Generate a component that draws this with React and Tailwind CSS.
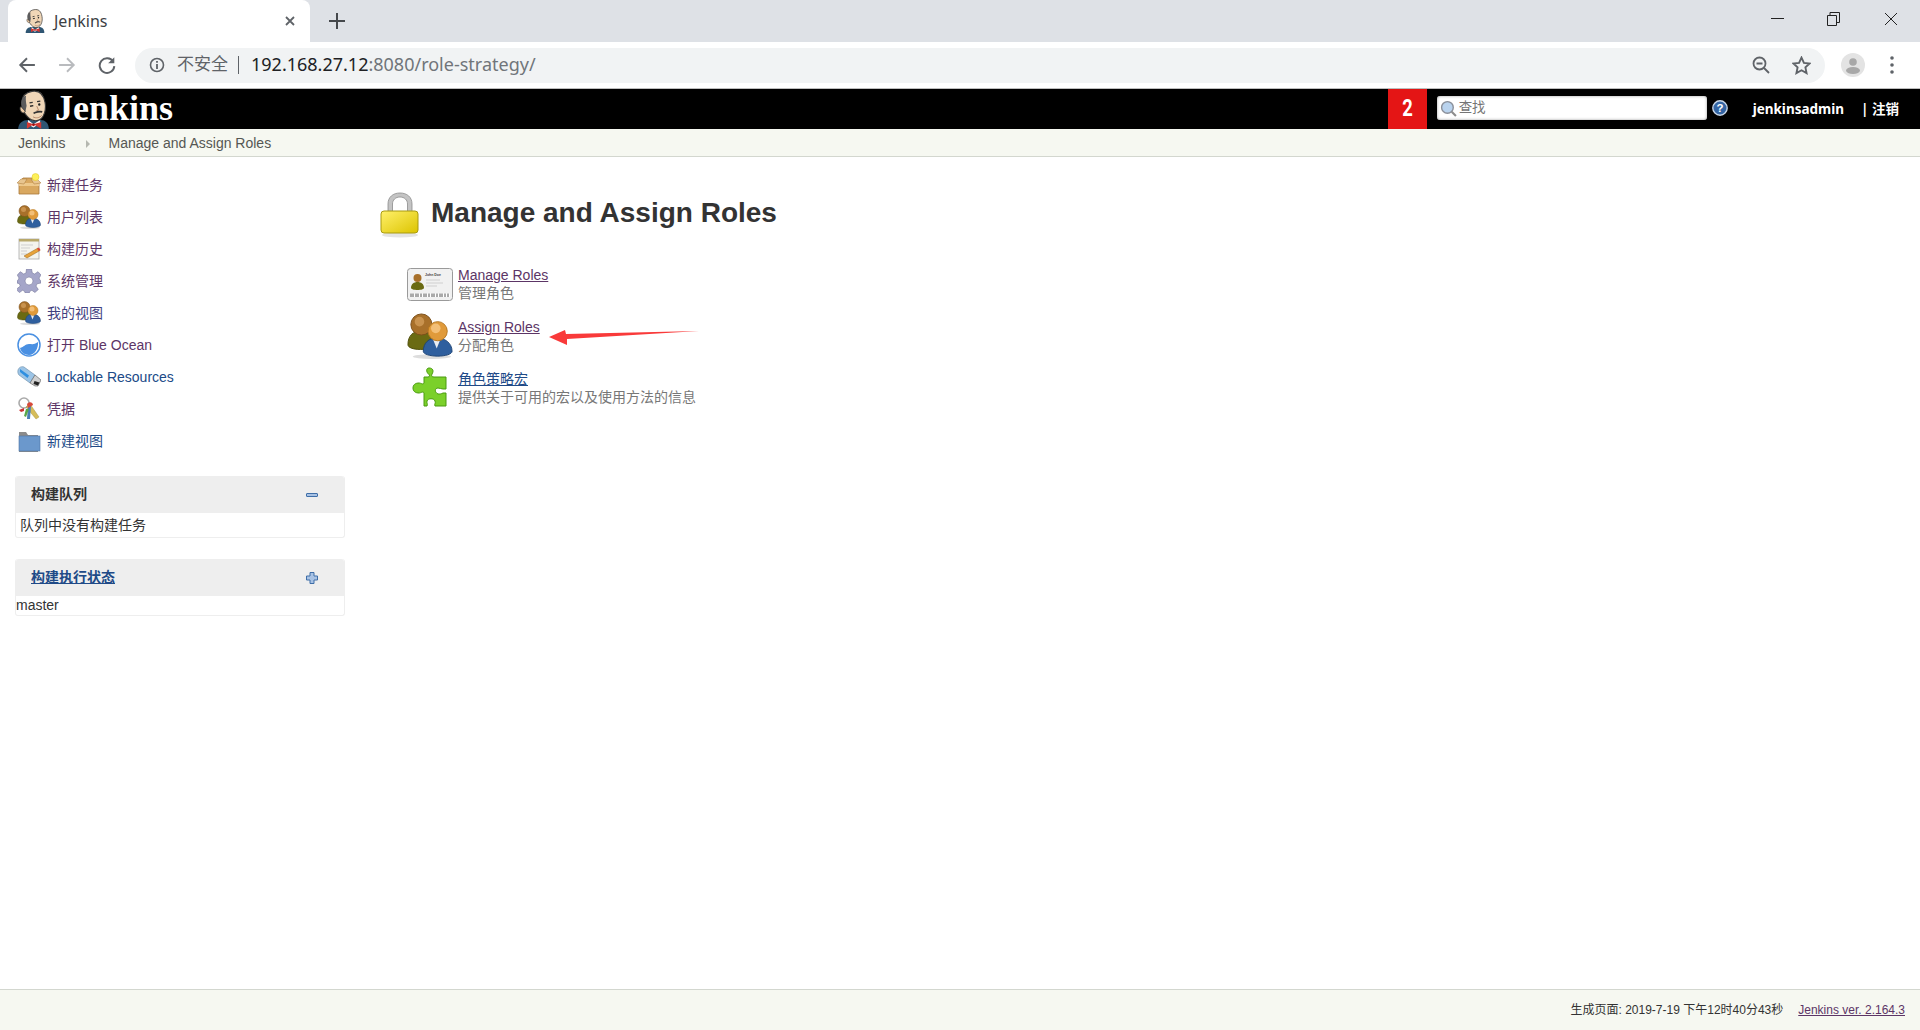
import React from "react";

const FONT = "[font-family:'Liberation_Sans','Noto_Sans_CJK_SC',sans-serif]";

function Butler({ className }) {
  return (
    <svg viewBox="0 0 30 36" className={className}>
      <path d="M1 36c0-6 4-9 9-9h11c5 0 8 3 8 9z" fill="#2f5673" />
      <path d="M10 27l5 4 6-4v3l-6 4-5-3z" fill="#fff" />
      <path d="M9 29l6 2-6 4zM22 29l-7 2 7 4z" fill="#d33833" />
      <circle cx="15" cy="31.500" r="1.300" fill="#a11" />
      <g transform="rotate(-10 15 15)">
        <path d="M5 13C5 5 9 1 16 1s10 4 10 12c0 4-1 7-2 9-2 4-5 6-8 6-4 0-6-2-8-5-2-3-3-6-3-10z" fill="#f0d6b7" stroke="#3a3a3a" strokeWidth="1" />
        <path d="M5 17C3 9 6 4 10 4c-1 3-1 6-1 9l-2 5z" fill="#5b5b5c" />
        <path d="M4 13c-2 0-2 5 1 6l2-1z" fill="#eac7a1" stroke="#3a3a3a" strokeWidth=".7" />
        <path d="M12 11h3M19 11h3" stroke="#333" strokeWidth="1.200" />
        <path d="M12 14h3" stroke="#222" strokeWidth="1.300" />
        <circle cx="20.500" cy="14" r="1.100" fill="#222" />
        <path d="M18 15l1 4-2 0" stroke="#b5876a" strokeWidth=".8" fill="none" />
        <path d="M14 21c2-1 6-1 8 0" stroke="#333" strokeWidth="1.500" fill="none" />
        <path d="M13 24c2 2 6 2 8 0" stroke="#b5876a" strokeWidth=".8" fill="none" />
      </g>
    </svg>
  );
}

function Users({ className }) {
  return (
    <svg viewBox="0 0 48 48" className={className}>
      <ellipse cx="26" cy="45.500" rx="20" ry="2.500" fill="#ddd" />
      <path d="M1 33c0-9 5-14 13-14s13 5 13 14c0 3-5 5-13 5S1 36 1 33z" fill="#6a6a12" stroke="#4d4d0a" />
      <circle cx="15" cy="12" r="11" fill="#a8702a" stroke="#7b4f1a" />
      <circle cx="13" cy="9" r="5" fill="#c9934f" />
      <path d="M17 40c0-9 6-14 14-14s16 5 16 14c0 3-7 5-15 5s-15-2-15-5z" fill="#2f5f9e" stroke="#1e4475" />
      <path d="M27 27l4 10 4-10z" fill="#e9edf3" />
      <circle cx="32" cy="19" r="10" fill="#e09a3a" stroke="#b5761f" />
      <circle cx="30" cy="16" r="5" fill="#f3bf77" />
    </svg>
  );
}

function NewJob({ className }) {
  return (
    <svg viewBox="0 0 24 24" className={className}>
      <path d="M2 10l4-5h12l4 5v11H2z" fill="#d9a860" stroke="#a9783a" strokeWidth=".8" />
      <path d="M2 10h20v3H2z" fill="#eec98c" />
      <path d="M0 10l4-4 6 0-3 5zM24 10l-4-4-6 0 3 5z" fill="#e8c58f" stroke="#a9783a" strokeWidth=".5" />
      <circle cx="18.500" cy="4" r="3.500" fill="#fdf05a" stroke="#e0c820" strokeWidth=".5" />
    </svg>
  );
}

function Notepad({ className }) {
  return (
    <svg viewBox="0 0 24 24" className={className}>
      <rect x="2" y="2" width="20" height="20" fill="#f4f4ee" stroke="#aaa" strokeWidth=".8" />
      <rect x="2" y="2" width="20" height="2.500" fill="#b8a86a" />
      <path d="M4 8h12M4 11h9M4 14h6M4 17h6" stroke="#cfcfcf" />
      <path d="M7 19l14-8 2 2.500-13 7.500z" fill="#e8a33a" stroke="#96661f" strokeWidth=".5" />
      <path d="M20 11.500l2-1 1.500 2.500-2 1z" fill="#d9483b" />
    </svg>
  );
}

function Gear({ className }) {
  return (
    <svg viewBox="0 0 24 24" className={className}>
      <path fillRule="evenodd" d="M9.500 0h5l.8 4 2.300 1 3.400-2.300 3 3.400L22 9l1 2.300 1 .7v2l-4 .8-1 2.300 2.300 3.400-3.400 3-3-2.200-1.900.8-.8 1.900h-4l-.8-1.900-1.900-.8-3 2.200-3.400-3L3.300 17l-1-2.300-2.300-.7v-2l1-.7L2 9 .3 6.100l3-3.400L6.700 5 9 4zM12 8a4 4 0 100 8 4 4 0 000-8z" fill="#a5a6c9" stroke="#77789c" strokeWidth=".6" />
    </svg>
  );
}

function Ocean({ className }) {
  return (
    <svg viewBox="0 0 24 24" className={className}>
      <circle cx="12" cy="12" r="11" fill="#fff" stroke="#4a90e2" strokeWidth="1.500" />
      <path d="M3 15c4-1 5-4 9-4 3 0 5 1 9-2 .5 6-3 13-9 13-5 0-8-3-9-7z" fill="#4a90e2" />
    </svg>
  );
}

function Usb({ className }) {
  return (
    <svg viewBox="0 0 24 24" className={className}>
      <path d="M1 5c1-3 4-4 6-3l11 8-5 8L2 10C1 9 .5 7 1 5z" fill="#9cc4e6" stroke="#6a8ca8" strokeWidth=".6" />
      <path d="M3 4l9 6.500-1.500 2.500L3 7z" fill="#2f8fe0" />
      <path d="M13 18l5-8 6 5-3 6h-3z" fill="#d0d0d0" stroke="#555" strokeWidth=".6" />
      <path d="M17.500 16l5 1.500-1.500 3-4.500-1.500z" fill="#222" />
    </svg>
  );
}

function Keys({ className }) {
  return (
    <svg viewBox="0 0 24 24" className={className}>
      <circle cx="7" cy="6" r="5" fill="none" stroke="#aaa" strokeWidth="1.600" />
      <path d="M9 10l10 12 3-2L13 7z" fill="#d6bd5a" stroke="#a08a30" strokeWidth=".4" />
      <path d="M11 9l-1 13h3l1-13z" fill="#4a7fb5" />
      <path d="M9 12l-2 7 2 1 3-8z" fill="#5aa84a" />
      <path d="M10 7c2-3 6-2 6 1l-5 3z" fill="#d84a3b" />
      <path d="M2 13l5-2v3l-3 1z" fill="#c33" />
    </svg>
  );
}

function Folder({ className }) {
  return (
    <svg viewBox="0 0 24 24" className={className}>
      <path d="M2 3h7l2 3h10v17H2z" fill="#8b8b8b" />
      <rect x="2" y="7" width="21" height="15" fill="#6b98cc" stroke="#4d76a6" strokeWidth=".6" />
    </svg>
  );
}

function Lock({ className }) {
  return (
    <svg viewBox="0 0 40 46" className={className}>
      <defs>
        <linearGradient id="lockbody" x1="0" y1="0" x2="1" y2="1">
          <stop offset="0" stopColor="#fff06a" />
          <stop offset="1" stopColor="#dcc400" />
        </linearGradient>
      </defs>
      <ellipse cx="20" cy="43" rx="18" ry="2.500" fill="#e4e4e4" />
      <path d="M8 20V12C8 5 13 1 20 1s12 4 12 11v8h-4.500v-8c0-4-3-7-7.500-7s-7.500 3-7.500 7v8z" fill="#c4c4c4" stroke="#8b8b8b" strokeWidth=".8" />
      <rect x="1" y="19" width="37" height="22" rx="3" fill="url(#lockbody)" stroke="#a89a10" />
    </svg>
  );
}

function IdCard({ className }) {
  return (
    <svg viewBox="0 0 46 34" className={className}>
      <rect x=".5" y=".5" width="45" height="32" rx="3" fill="#f1f1f1" stroke="#9a9a9a" />
      <circle cx="10.500" cy="10" r="4" fill="#a8702a" />
      <path d="M4 20c0-4 3-6 6.500-6s6.500 2 6.500 6c0 1-3 2-6.500 2S4 21 4 20z" fill="#6a6a12" />
      <text x="18" y="8" fontSize="3.500" fontWeight="700" fill="#444" fontFamily="Liberation Sans">John Doe</text>
      <path d="M19 12h14M19 15h17M19 18h11" stroke="#cfcfcf" />
      <path d="M3 25.500h40v3.500H3z" fill="#fff" />
      <path d="M4 25.500v3.500M6 25.500v3.500M9 25.500v3.500M11 25.500v3.500M14 25.500v3.500M17 25.500v3.500M19 25.500v3.500M22 25.500v3.500M25 25.500v3.500M27 25.500v3.500M30 25.500v3.500M33 25.500v3.500M35 25.500v3.500M38 25.500v3.500M41 25.500v3.500" stroke="#555" />
    </svg>
  );
}

function Puzzle({ className }) {
  return (
    <svg viewBox="0 0 36 42" className={className}>
      <path d="M17 1c4 0 5 3 3 6-1 2 0 3 2 3h12v12h-3c-2 0-3-1-5-1-3 0-4 4 0 6 2 0 3 0 5-1h3v13H23c-1-2 1-3 0-5-1-3-7-3-8 0-.5 2 1 3 0 5H12V26c-1-2-3 0-5 0-4 0-6-2-6-5 0-3 2-5 6-5 2 0 4 2 5 0v-6h4c2 0 2-2 .5-3C14 5 14 1 17 1z" fill="#7bd02a" stroke="#4a9a10" strokeWidth="1" />
    </svg>
  );
}

function Pane({ title, link, symbol, children, bodyClass }) {
  return (
    <div className="w-[330px] rounded-[3px] border border-[#eee] border-t-0">
      <div className="flex h-[37px] items-center justify-between rounded-t-[3px] bg-[#eeeeee] pl-[15px] pr-[26px] text-[14px] font-bold text-[#333]">
        {link ? <span className="text-[#204a87] underline">{title}</span> : <span>{title}</span>}
        {symbol}
      </div>
      <div className={bodyClass}>{children}</div>
    </div>
  );
}

const side = [
  [NewJob, "新建任务", "text-[#5c3566]"],
  [Users, "用户列表", "text-[#5c3566]"],
  [Notepad, "构建历史", "text-[#5c3566]"],
  [Gear, "系统管理", "text-[#5c3566]"],
  [Users, "我的视图", "text-[#3f3f7f]"],
  [Ocean, "打开 Blue Ocean", "text-[#5c3566]"],
  [Usb, "Lockable Resources", "text-[#204a87]"],
  [Keys, "凭据", "text-[#5c3566]"],
  [Folder, "新建视图", "text-[#204a87]"],
];

export default function App() {
  return (
    <div className={`flex h-[1030px] w-[1920px] flex-col overflow-hidden bg-white ${FONT}`}>
      {/* tab strip */}
      <div className="flex h-[42px] bg-[#dee1e6]">
        <div className="ml-[8px] flex h-[42px] w-[302px] items-center rounded-t-[8px] bg-white pl-[17px] pr-[14px]">
          <Butler className="h-[24px] w-[20px] shrink-0" />
          <span className="ml-[9px] flex-1 text-[16px] text-[#3c4043] [font-family:'Noto_Sans',sans-serif]">Jenkins</span>
          <svg viewBox="0 0 12 12" className="h-[12px] w-[12px]">
            <path d="M2 2l8 8M10 2l-8 8" stroke="#5f6368" strokeWidth="1.800" />
          </svg>
        </div>
        <div className="ml-[19px] self-center">
          <svg viewBox="0 0 16 16" className="h-[16px] w-[16px]">
            <path d="M8 0v16M0 8h16" stroke="#45484c" strokeWidth="2" />
          </svg>
        </div>
        <div className="ml-auto mt-[12px] flex items-start self-start pr-[22px]">
          <svg viewBox="0 0 13 13" className="h-[13px] w-[13px]"><path d="M0 6.500h13" stroke="#222" strokeWidth="1" /></svg>
          <svg viewBox="0 0 13 14" className="ml-[43px] h-[14px] w-[13px]">
            <path d="M.5 3.500h9v10h-9zM3 3.500V.5h9.500v10H9.500" stroke="#222" fill="none" />
          </svg>
          <svg viewBox="0 0 14 14" className="ml-[44px] h-[14px] w-[14px]"><path d="M1 1l12 12M13 1L1 13" stroke="#222" strokeWidth="1" /></svg>
        </div>
      </div>

      {/* toolbar */}
      <div className="flex h-[47px] items-center border-b border-[#bdbdbd] bg-white">
        <div className="ml-[18px] flex w-[117px] items-center gap-[22px]">
          <svg viewBox="0 0 16 16" className="h-[18px] w-[18px]"><path d="M15 8H2M8 2L2 8l6 6" stroke="#5f6368" strokeWidth="1.700" fill="none" /></svg>
          <svg viewBox="0 0 16 16" className="h-[18px] w-[18px]"><path d="M1 8h13M8 2l6 6-6 6" stroke="#b9bbbe" strokeWidth="1.700" fill="none" /></svg>
          <svg viewBox="0 0 16 16" className="h-[18px] w-[18px]"><path d="M13.500 5A6.500 6.500 0 1014.500 9" stroke="#5f6368" strokeWidth="1.700" fill="none" /><path d="M14.500 1v5.500H9z" fill="#5f6368" /></svg>
        </div>
        <div className="flex h-[35px] w-[1690px] items-center rounded-full bg-[#f1f3f4] pl-[14px] pr-[14px]">
          <svg viewBox="0 0 16 16" className="h-[16px] w-[16px] shrink-0">
            <circle cx="8" cy="8" r="6.500" fill="none" stroke="#5f6368" strokeWidth="1.600" />
            <path d="M8 7v5M8 4v1.800" stroke="#5f6368" strokeWidth="1.800" />
          </svg>
          <span className="ml-[12px] text-[17px] text-[#5f6368]">不安全</span>
          <span className="ml-[10px] h-[18px] w-px bg-[#5f6368]" />
          <span className="mb-[2px] ml-[12px] text-[18px] text-[#202124] [font-family:'Noto_Sans',sans-serif]">
            192.168.27.12<span className="text-[#70757a]">:8080/role-strategy/</span>
          </span>
          <div className="ml-auto flex items-center gap-[22px]">
            <svg viewBox="0 0 18 18" className="h-[18px] w-[18px]">
              <circle cx="7.500" cy="7.500" r="6" fill="none" stroke="#5f6368" strokeWidth="1.800" />
              <path d="M4.500 7.500h6M12 12l5 5" stroke="#5f6368" strokeWidth="1.800" />
            </svg>
            <svg viewBox="0 0 18 18" className="h-[19px] w-[19px]">
              <path d="M9 1.500l2.300 5 5.400.6-4 3.700 1.100 5.400L9 13.500l-4.800 2.700 1.100-5.400-4-3.700 5.400-.6z" fill="none" stroke="#5f6368" strokeWidth="1.800" />
            </svg>
          </div>
        </div>
        <svg viewBox="0 0 24 24" className="ml-[16px] h-[24px] w-[24px] shrink-0">
          <circle cx="12" cy="12" r="12" fill="#e3e3e3" />
          <circle cx="12" cy="9" r="3.800" fill="#a8a8a8" />
          <ellipse cx="12" cy="17.500" rx="7" ry="3.500" fill="#a8a8a8" />
        </svg>
        <svg viewBox="0 0 4 18" className="ml-[25px] h-[18px] w-[4px] shrink-0">
          <circle cx="2" cy="2" r="1.800" fill="#5f6368" />
          <circle cx="2" cy="9" r="1.800" fill="#5f6368" />
          <circle cx="2" cy="16" r="1.800" fill="#5f6368" />
        </svg>
      </div>

      {/* Jenkins header */}
      <div className="flex h-[40px] items-center bg-black">
        <Butler className="ml-[17px] mt-[1px] h-[40px] w-[33px] shrink-0" />
        <span className="mb-[2px] ml-[5px] text-[36px] font-bold leading-none text-white [font-family:'Liberation_Serif',serif]">Jenkins</span>
        <div className="ml-auto flex h-full w-[39px] items-center justify-center bg-[#e41515] text-[23px] font-bold text-white [font-family:'Roboto',sans-serif]">
          <span className="inline-block scale-x-80">2</span>
        </div>
        <div className="mb-[2px] ml-[10px] flex h-[24px] w-[270px] items-center rounded-[3px] bg-white pl-[3px] shadow-[inset_0_0_3px_#999]">
          <svg viewBox="0 0 16 16" className="h-[17px] w-[17px]">
            <circle cx="7" cy="7" r="5.500" fill="#b9d3ee" stroke="#8a8f99" strokeWidth="1.300" />
            <path d="M11 11l4 4" stroke="#8d8d8d" strokeWidth="2" />
          </svg>
          <span className="ml-[2px] text-[13.500px] text-[#757575]">查找</span>
        </div>
        <svg viewBox="0 0 14 14" className="mb-[2px] ml-[5px] h-[16px] w-[16px]">
          <circle cx="7" cy="7" r="6.300" fill="#3465a4" stroke="#c8d6e8" strokeWidth="1.200" />
          <text x="7" y="10.500" textAnchor="middle" fontSize="10" fontWeight="700" fill="#fff" fontFamily="Liberation Sans">?</text>
        </svg>
        <span className="ml-[25px] mt-[1px] text-[13.500px] font-bold text-white [font-family:'Noto_Sans','Noto_Sans_CJK_SC',sans-serif]">jenkinsadmin</span>
        <span className="ml-[17px] mr-[21px] mt-[1px] text-[13.500px] font-bold text-white [font-family:'Noto_Sans','Noto_Sans_CJK_SC',sans-serif]">|&nbsp;注销</span>
      </div>

      {/* breadcrumb */}
      <div className="flex h-[28px] items-center border-b border-[#d3d7cf] bg-[#f6f8f1] pl-[18px] pt-[2px] text-[14px] text-[#555753]">
        <span>Jenkins</span>
        <svg viewBox="0 0 4 8" className="ml-[21px] mr-[18px] h-[8px] w-[4px]"><path d="M0 0l4 4-4 4z" fill="#b5b8b0" /></svg>
        <span>Manage and Assign Roles</span>
      </div>

      {/* body */}
      <div className="relative flex flex-1">
        <aside className="w-[360px] shrink-0 pl-[15px] pt-[12px]">
          <nav className="flex flex-col">
            {side.map(([Icon, label, color]) => (
              <div key={label} className="flex h-[32px] items-center pl-[2px]">
                <Icon className="h-[24px] w-[24px] shrink-0" />
                <span className={`ml-[6px] text-[14px] ${color}`}>{label}</span>
              </div>
            ))}
          </nav>
          <div className="mt-[19px]">
            <Pane
              title="构建队列"
              symbol={<span className="block h-[4px] w-[12px] rounded-[1px] border border-[#3f6ea8] bg-[#a8c2e4]" />}
              bodyClass="flex h-[24px] items-center pl-[4px] text-[14px] text-[#333]"
            >
              队列中没有构建任务
            </Pane>
          </div>
          <div className="mt-[21px]">
            <Pane
              title="构建执行状态"
              link
              symbol={
                <svg viewBox="0 0 12 12" className="h-[12px] w-[12px]">
                  <path d="M4 .5h4v3.500h3.500v4H8v3.500H4V8H.5V4H4z" fill="#a8c2e4" stroke="#3f6ea8" />
                </svg>
              }
              bodyClass="flex h-[19px] items-center text-[14px] text-[#333]"
            >
              master
            </Pane>
          </div>
        </aside>

        <main className="flex-1 pl-[20px]">
          <div className="mt-[31px] flex items-center">
            <Lock className="mt-[4px] h-[46px] w-[40px]" />
            <h1 className="ml-[11px] text-[28px] font-bold leading-none text-[#333]">Manage and Assign Roles</h1>
          </div>
          <div className="ml-[27px] mt-[20px] flex flex-col">
            <div className="flex h-[52px] items-center">
              <div className="flex w-[46px] justify-center"><IdCard className="mt-[2px] h-[34px] w-[46px]" /></div>
              <div className="ml-[5px] text-[14px] leading-[18px]">
                <div className="text-[#5c3566] underline">Manage Roles</div>
                <div className="text-[#777]">管理角色</div>
              </div>
            </div>
            <div className="flex h-[52px] items-center">
              <div className="flex w-[46px] justify-center"><Users className="h-[46px] w-[46px]" /></div>
              <div className="ml-[5px] text-[14px] leading-[18px]">
                <div className="text-[#5c3566] underline">Assign Roles</div>
                <div className="text-[#777]">分配角色</div>
              </div>
            </div>
            <div className="flex h-[52px] items-center">
              <div className="flex w-[46px] justify-center"><Puzzle className="h-[42px] w-[38px]" /></div>
              <div className="ml-[5px] text-[14px] leading-[18px]">
                <div className="text-[#204a87] underline">角色策略宏</div>
                <div className="text-[#777]">提供关于可用的宏以及使用方法的信息</div>
              </div>
            </div>
          </div>
        </main>

        {/* annotation arrow */}
        <svg viewBox="0 0 150 20" className="absolute left-[549px] top-[170px] h-[20px] w-[150px]">
          <path d="M0 10L16 3l1 4 133-3-132 8 0 6z" fill="#f93a3a" />
        </svg>
      </div>

      {/* footer */}
      <div className="flex h-[41px] items-center justify-end border-t border-[#d3d7cf] bg-[#f6f8f1] pr-[15px] text-[12px] text-[#333]">
        <span>生成页面: 2019-7-19 下午12时40分43秒</span>
        <span className="ml-[15px] text-[#5c3566] underline">Jenkins ver. 2.164.3</span>
      </div>
    </div>
  );
}
